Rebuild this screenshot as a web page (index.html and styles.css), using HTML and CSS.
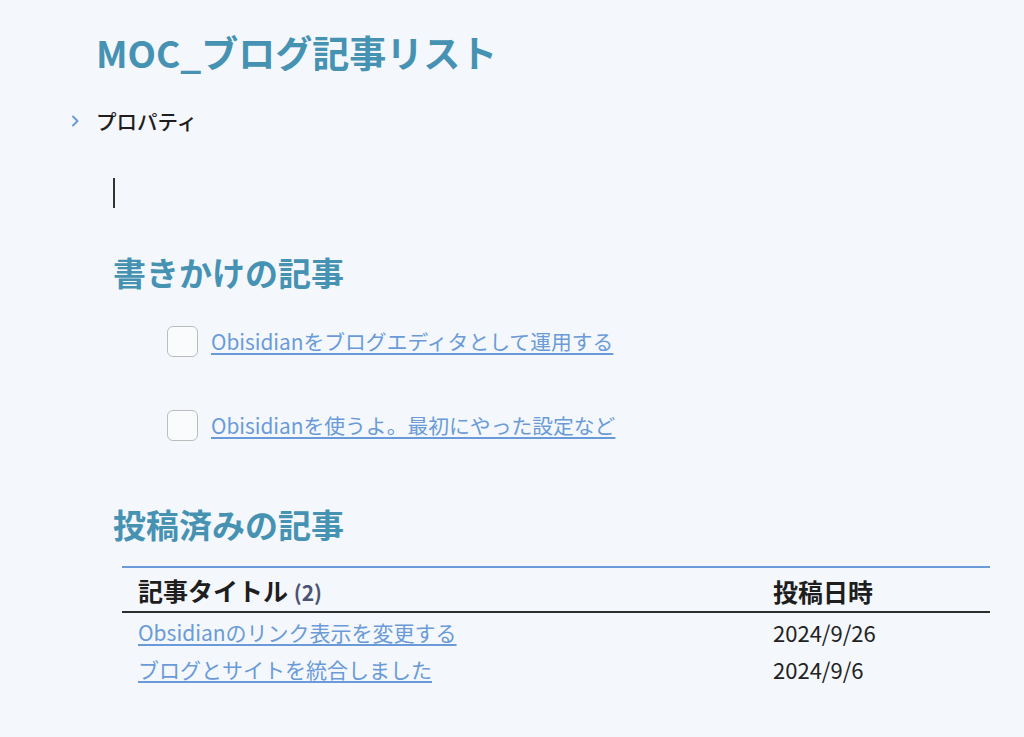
FILE: index.html
```html
<!DOCTYPE html>
<html lang="ja">
<head>
    <meta charset="UTF-8">
    <meta name="viewport" content="width=device-width, initial-scale=1.0">
    <title>MOC_ブログ記事リスト</title>
    <link rel="stylesheet" href="styles.css">
</head>
<body>
    <div class="note">
        <div class="inline-title">MOC_ブログ記事リスト</div>

        <div class="props">
            <svg class="chevron" width="10" height="14" viewBox="0 0 10 14">
                <path d="M3 2.5 L7.5 7 L3 11.5" fill="none" stroke="#6a9bd8" stroke-width="2" stroke-linecap="round" stroke-linejoin="round"/>
            </svg>
            <span>プロパティ</span>
        </div>

        <div class="editor">
            <div class="line"><span class="cursor"></span></div>

            <h2>書きかけの記事</h2>

            <div class="task">
                <span class="checkbox"></span>
                <a href="#">Obisidianをブログエディタとして運用する</a>
            </div>
            <div class="task task-gap">
                <span class="checkbox"></span>
                <a href="#">Obisidianを使うよ。最初にやった設定など</a>
            </div>

            <h2 class="h2-second">投稿済みの記事</h2>

            <table class="dv-table">
                <thead>
                    <tr>
                        <th>記事タイトル <span class="count">(2)</span></th>
                        <th class="col-date">投稿日時</th>
                    </tr>
                </thead>
                <tbody>
                    <tr class="first">
                        <td><a href="#">Obsidianのリンク表示を変更する</a></td>
                        <td class="date">2024/9/26</td>
                    </tr>
                    <tr>
                        <td><a href="#">ブログとサイトを統合しました</a></td>
                        <td class="date">2024/9/6</td>
                    </tr>
                </tbody>
            </table>
        </div>
    </div>
</body>
</html>
```

FILE: styles.css
```css
body { margin: 0; background: #f4f7fb; font-family: "Noto Sans CJK JP", "Noto Sans", sans-serif; color: #222; }
a { color: #6a9bd8; text-decoration: underline; text-underline-offset: 3px; }

.note { width: 1024px; height: 737px; overflow: hidden; }

.inline-title { padding: 30px 0 0 96px; font-size: 37px; line-height: 44px; font-weight: 700; color: #4692b3; }

.props { display: flex; align-items: center; margin-top: 32px; padding-left: 70px; height: 30px; font-size: 20.5px; font-weight: 500; }
.props .chevron { width: 10px; margin-right: 16px; }
.props span { color: #1e1e1e; }

.editor { padding-left: 113px; padding-right: 34px; }
.line { margin-top: 42px; height: 31px; }
.cursor { display: block; width: 1.5px; height: 30px; background: #333; }

h2 { margin: 41px 0 0; font-size: 33px; line-height: 44px; font-weight: 700; color: #4692b3; }
.h2-second { margin-top: 61px; }

.task { display: flex; align-items: center; margin-top: 31px; padding-left: 54px; height: 32px; font-size: 20.8px; }
.task-gap { margin-top: 52px; }
.checkbox { width: 29px; height: 29px; border: 1.5px solid #bcbcbc; border-radius: 6px; background: #fafbfd; margin-right: 13px; flex-shrink: 0; }

.dv-table { margin: 20px 0 0 9px; width: 868px; border-collapse: collapse; font-size: 21px; }
.dv-table thead tr { border-top: 2px solid #6a9bd8; border-bottom: 2px solid #2e2e2e; }
.dv-table th { text-align: left; font-size: 25px; font-weight: 700; padding: 5px 16px 2px; line-height: 34px; color: #1e1e1e; }
.dv-table th .count { font-size: 21px; color: #4b5470; }
.dv-table .col-date { width: 201px; }
.dv-table td { padding: 4px 16px 4px; line-height: 29px; color: #222; }
.dv-table td.date { font-size: 22px; }
.dv-table tr.first td { padding-top: 5px; }
```
